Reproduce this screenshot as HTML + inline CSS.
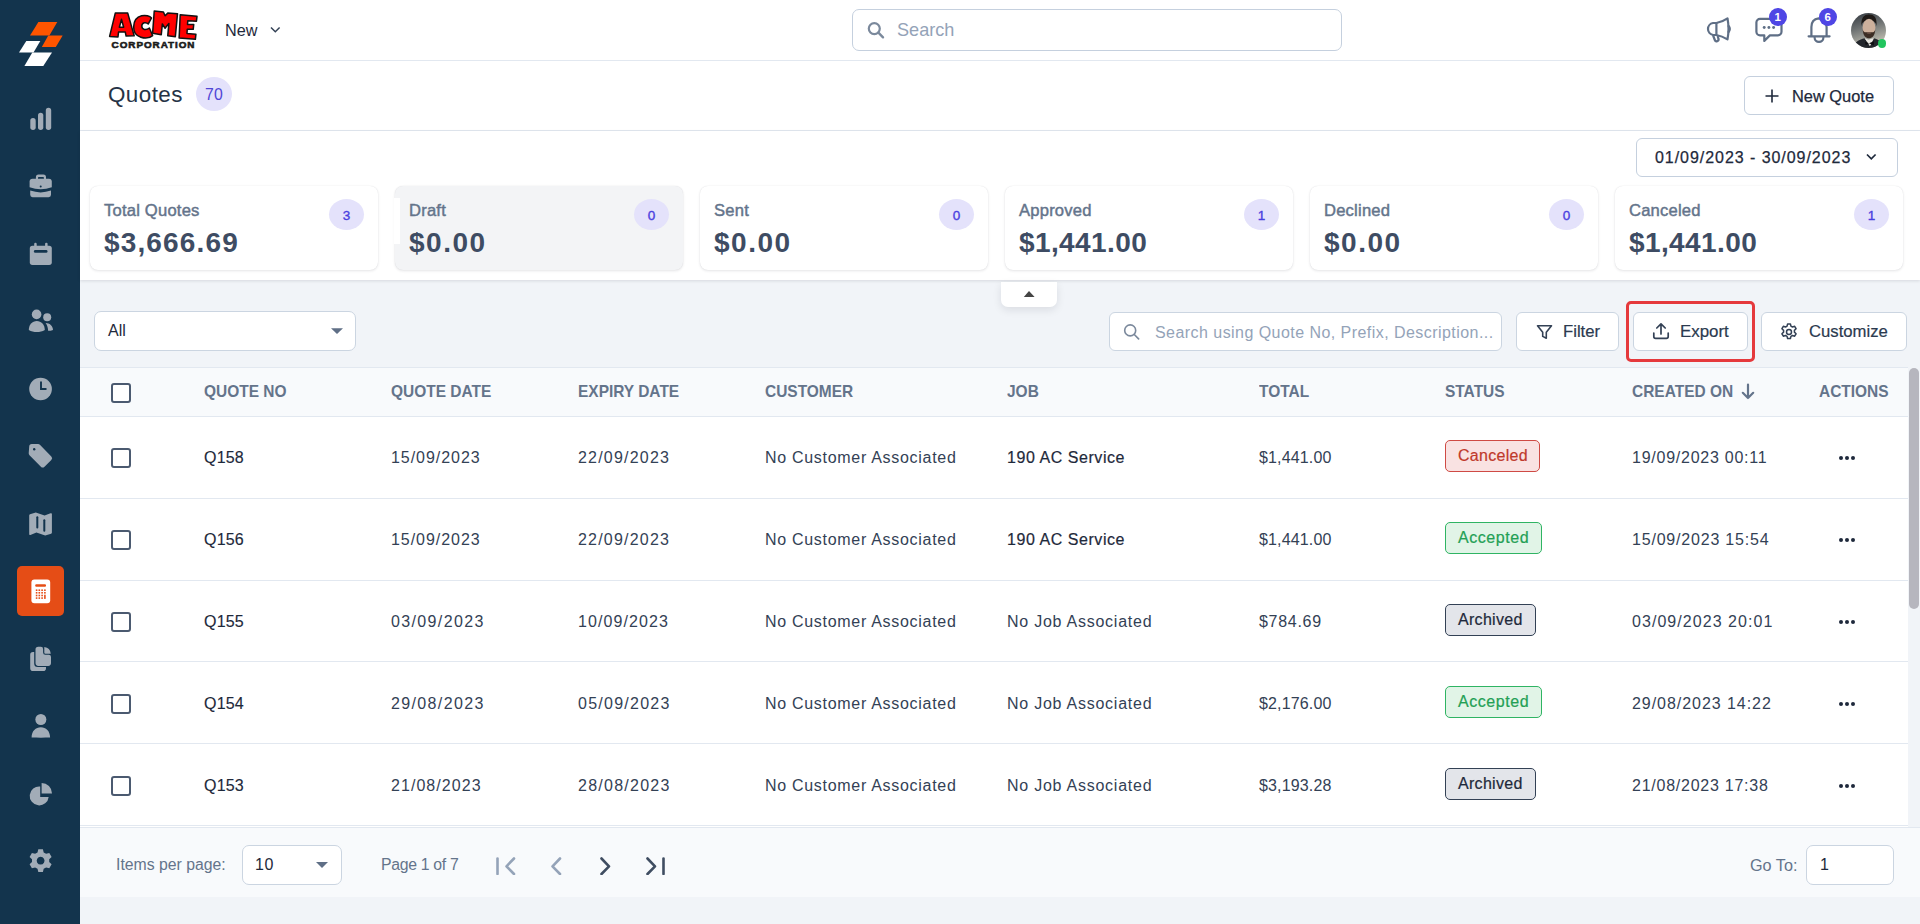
<!DOCTYPE html>
<html><head><meta charset="utf-8">
<style>
*{box-sizing:border-box;margin:0;padding:0}
html,body{width:1920px;height:924px;overflow:hidden;background:#f1f4f8;font-family:"Liberation Sans",sans-serif;color:#334155}
.abs{position:absolute}
#side{position:absolute;left:0;top:0;width:80px;height:924px;background:#13344d}
#side svg.ic{position:absolute;left:28px;width:25px;height:25px}
#hdr{position:absolute;left:80px;top:0;width:1840px;height:61px;background:#fff;border-bottom:1px solid #e2e8f0}
#title{position:absolute;left:80px;top:61px;width:1840px;height:70px;background:#fff;border-bottom:1px solid #e2e8f0}
#stats{position:absolute;left:80px;top:131px;width:1840px;height:149px;background:#fff;box-shadow:0 1px 3px rgba(15,23,42,.12)}
.card{position:absolute;top:55px;width:288px;height:84px;background:#fff;border-radius:8px;box-shadow:0 1px 3px rgba(15,23,42,.10),0 0 1px rgba(15,23,42,.12)}
.card .lbl{position:absolute;left:14px;top:15px;font-size:16.6px;color:#64748b;font-weight:400;-webkit-text-stroke:.45px #64748b;letter-spacing:.2px}
.card .val{position:absolute;left:14px;top:40.5px;font-size:28px;color:#3e4c63;font-weight:700;letter-spacing:1px}
.card .bdg{position:absolute;left:239px;top:13px;width:35px;height:31px;border-radius:50%;background:#e4e2fb;color:#4a3fe0;font-size:13.5px;text-align:center;line-height:33px;-webkit-text-stroke:.35px #4a3fe0}
.btn{position:absolute;background:#fff;border:1px solid #cbd5e1;border-radius:6px}
.txt{position:absolute;white-space:nowrap}
.th{position:absolute;top:381.5px;font-size:17px;font-weight:700;color:#64748b;white-space:nowrap;transform:scaleX(.91);transform-origin:left}
.row{position:absolute;left:80px;width:1828px;height:82px;background:#fff;border-bottom:1px solid #e2e8f0}
.cb{position:absolute;left:31px;width:20px;height:20px;border:2px solid #4b5a70;border-radius:3px;background:#fff}
.cell{position:absolute;top:32px;font-size:16px;color:#334155;white-space:nowrap;letter-spacing:.75px}
.st{position:absolute;left:1365px;top:23px;height:32px;border-radius:5px;border:1.5px solid;font-size:16px;line-height:29px;padding-left:12px;letter-spacing:.3px;-webkit-text-stroke:.2px currentColor}
.dots{position:absolute;left:1759px;top:39px}
.dots i{position:absolute;top:0;width:4px;height:4px;border-radius:50%;background:#1e293b}
</style></head><body>
<div id="side">
<svg class="abs" style="left:0;top:0" width="80" height="80" viewBox="0 0 80 80">
<polygon points="38.4,22 57.3,22 49.4,35.4 30,35.4" fill="#ff5500"/>
<polygon points="48.3,35.4 62.7,35.4 55.8,47 41.8,47" fill="#ff5500"/>
<polygon points="26.3,40.9 40.3,40.9 33.5,52.4 19,52.4" fill="#fff"/>
<polygon points="32.3,52.4 52,52.4 43.3,66 24.4,66" fill="#fff"/>
</svg>
<svg class="abs" style="left:0;top:0" width="80" height="924" viewBox="0 0 80 924" fill="#a2acb7">
<!-- bar chart -->
<rect x="30.3" y="118" width="5.4" height="12" rx="2.7"/>
<rect x="38" y="112.7" width="5.3" height="17.3" rx="2.65"/>
<rect x="45.8" y="107.7" width="5.4" height="22.3" rx="2.7"/>
<!-- briefcase -->
<path d="M35.9 178.9 v-1.7 a2.6 2.6 0 0 1 2.6-2.6 h4.9 a2.6 2.6 0 0 1 2.6 2.6 v1.7 h-2.1 v-1.1 a.7.7 0 0 0-.7-.7 h-4.5 a.7.7 0 0 0-.7.7 v1.1 z"/>
<path d="M29.6 181.6 a2.9 2.9 0 0 1 2.9-2.9 h16.4 a2.9 2.9 0 0 1 2.9 2.9 v5.6 Q40.7 191.4 29.6 187.2 z"/>
<path d="M30.2 190.6 Q40.7 194.2 51 190.6 v4.2 a2.4 2.4 0 0 1-2.4 2.4 h-16 a2.4 2.4 0 0 1-2.4-2.4 z"/>
<circle cx="40.7" cy="186.6" r="1" fill="#13344d"/>
<!-- calendar -->
<rect x="29.8" y="245.8" width="22" height="19.1" rx="2.6"/>
<rect x="34.2" y="242.8" width="2.5" height="4.5" rx="1.2"/>
<rect x="45.1" y="242.8" width="2.5" height="4.5" rx="1.2"/>
<rect x="33.9" y="250.1" width="13.6" height="2.6" rx="1.3" fill="#13344d"/>
<!-- users -->
<circle cx="36.6" cy="314.4" r="4.8"/>
<circle cx="47.2" cy="317.2" r="4"/>
<path d="M28.8 330 c0-5.5 3.5-9.1 8-9.1 s8 3.6 8 9.1 c-2.4 1.5-5 2-8 2 s-5.6-.5-8-2z"/>
<path d="M45.6 322.9 c4 0 7.4 2.8 7.4 7 c-1.5.6-3.2.8-4.9.8 c0-3-.8-5.5-2.5-7.8z"/>
<!-- clock -->
<circle cx="40.55" cy="389" r="11.35"/>
<path d="M41 381.5 V389 H46.5" stroke="#13344d" stroke-width="1.9" fill="none"/>
<!-- tag -->
<path d="M29.2 446.6 a2.6 2.6 0 0 1 2.6-2.6 h6.2 a2.6 2.6 0 0 1 1.9.8 l11.4 11.6 a2.6 2.6 0 0 1 0 3.6 l-6.8 6.7 a2.6 2.6 0 0 1-3.6 0 l-11.4-11.5 a2.6 2.6 0 0 1-.8-1.9z"/>
<circle cx="34.2" cy="449.3" r="1.2" fill="#13344d"/>
<!-- map -->
<path d="M29.2 515.5 Q29.2 514.6 30 514.3 L35.8 512.6 L44.6 515.6 L50.6 513.3 Q51.9 512.9 51.9 514 V532.6 Q51.9 533.4 51.1 533.7 L45.2 535.6 L36.4 532.6 L30.4 534.9 Q29.2 535.3 29.2 534.2 Z"/>
<rect x="36.3" y="516.2" width="2" height="12.2" rx="1" fill="#13344d"/>
<rect x="43.3" y="519.3" width="2" height="12.5" rx="1" fill="#13344d"/>
<!-- files -->
<path d="M38.3 646.8 h2.6 a2.2 2.2 0 0 1 2.2 2.2 v3.5 a2.2 2.2 0 0 0 2.2 2.2 h3.5 a2.2 2.2 0 0 1 2.2 2.2 v6.2 a2.8 2.8 0 0 1-2.8 2.8 h-9.9 a2.8 2.8 0 0 1-2.8-2.8 v-13.5 a2.8 2.8 0 0 1 2.8-2.8z"/>
<path d="M44.3 647 A7.6 7.6 0 0 1 50.8 653.8 L45.4 653.8 a1.1 1.1 0 0 1-1.1-1.1z"/>
<path d="M30.2 654.7 a2.8 2.8 0 0 1 2.8-2.8 h1.2 v11.6 a3.6 3.6 0 0 0 3.6 3.6 h8.2 v1.2 a2.8 2.8 0 0 1-2.8 2.8 h-10.2 a2.8 2.8 0 0 1-2.8-2.8z"/>
<!-- user -->
<circle cx="40.85" cy="719.5" r="5.5"/>
<path d="M31.6 737.6 c0-6.8 4.2-10.4 9.25-10.4 s9.25 3.6 9.25 10.4 c-2.8.1-6.1.1-9.25.1 s-6.4 0-9.25-.1z"/>
<!-- pie -->
<path d="M40.2 786.45 A9.5 9.5 0 1 0 48.65 796.9 H40.2 Z"/>
<path d="M41.6 783 A10.4 10.4 0 0 1 52 793.4 H41.6 Z"/>
<!-- gear -->
<path fill-rule="evenodd" d="M38.3 849.2 h4.6 l.8 3.2 l2.4 1.4 l3.2-.9 l2.3 4 l-2.4 2.3 v2.8 l2.4 2.3 l-2.3 4 l-3.2-.9 l-2.4 1.4 l-.8 3.2 h-4.6 l-.8-3.2 l-2.4-1.4 l-3.2.9 l-2.3-4 l2.4-2.3 v-2.8 l-2.4-2.3 l2.3-4 l3.2.9 l2.4-1.4z M40.6 856.8 a3.9 3.9 0 1 0 .01 0z"/>
</svg>
<div class="abs" style="left:17px;top:566px;width:47px;height:50px;border-radius:5px;background:#e54d16"></div>
<svg class="abs" style="left:0;top:.6px" width="80" height="924" viewBox="0 0 80 924">
<rect x="31.4" y="578.4" width="18.8" height="23.8" rx="3" fill="#fff"/>
<rect x="35.2" y="583.2" width="10.8" height="2.6" rx="1.1" fill="#e54d16"/>
<g fill="#e54d16"><rect x="35.8" y="588.4" width="1.6" height="1.6"/><rect x="38.5" y="588.4" width="1.6" height="1.6"/><rect x="41.3" y="588.4" width="1.6" height="1.6"/><rect x="44.1" y="588.4" width="1.6" height="1.6"/><rect x="35.8" y="591.0" width="1.6" height="1.6"/><rect x="38.5" y="591.0" width="1.6" height="1.6"/><rect x="41.3" y="591.0" width="1.6" height="1.6"/><rect x="44.1" y="591.0" width="1.6" height="1.6"/><rect x="35.8" y="593.7" width="1.6" height="1.6"/><rect x="38.5" y="593.7" width="1.6" height="1.6"/><rect x="41.3" y="593.7" width="1.6" height="1.6"/><rect x="44.1" y="593.7" width="1.6" height="4.2"/><rect x="35.8" y="596.3" width="1.6" height="1.6"/><rect x="38.5" y="596.3" width="1.6" height="1.6"/><rect x="41.3" y="596.3" width="1.6" height="1.6"/></g>
</svg>
</div>
<div id="hdr">
<svg class="abs" style="left:25px;top:5px" width="100" height="50" viewBox="0 0 1848 924">
<g fill="#f00" stroke="#111" stroke-width="28" stroke-linejoin="round">
<path d="M85 580 L190 150 L420 150 L540 570 L390 575 L375 500 L250 500 L240 590 Z M265 410 L305 265 L345 410 Z" fill-rule="evenodd"/>
<path d="M860 240 C800 170 540 150 530 400 C520 620 780 650 880 565 L820 425 C760 470 680 460 680 390 C680 320 760 310 800 350 Z"/>
<path d="M880 520 L910 110 L1080 130 L1110 200 L1160 150 L1340 160 L1300 585 L1160 570 L1180 340 L1110 430 L1060 350 L1040 550 Z"/>
<path d="M1370 610 L1390 180 L1700 210 L1690 300 L1530 290 L1525 360 L1640 360 L1630 450 L1520 450 L1515 525 L1680 540 L1670 635 Z"/>
</g>
</svg>
<div class="txt" style="left:31.6px;top:39.4px;font-size:9.9px;font-weight:700;color:#1a1a1a;letter-spacing:.95px;-webkit-text-stroke:.6px #1a1a1a;transform:scaleX(1.0);transform-origin:left">CORPORATION</div>
<div class="txt" style="left:145px;top:21px;font-size:16.2px;color:#1e293b">New</div>
<svg class="abs" style="left:190px;top:26px" width="11" height="8" viewBox="0 0 11 8"><path d="M1 1.5 L5.3 5.8 L9.6 1.5" stroke="#334155" stroke-width="1.5" fill="none"/></svg>
<div class="btn" style="left:772px;top:9px;width:490px;height:42px;border-color:#c5d0de;border-radius:7px"></div>
<svg class="abs" style="left:786px;top:20px" width="22" height="22" viewBox="0 0 22 22"><circle cx="8.3" cy="8.6" r="5.5" stroke="#7b899c" stroke-width="2.2" fill="none"/><path d="M12.4 12.7 L17 17.3" stroke="#7b899c" stroke-width="2.4" stroke-linecap="round"/></svg>
<div class="txt" style="left:817px;top:20px;font-size:18.1px;color:#94a3b8">Search</div>
<svg class="abs" style="left:1620px;top:10px" width="140" height="40" viewBox="1700 10 140 40" fill="none" stroke="#5f6f86" stroke-width="2.2" stroke-linecap="round" stroke-linejoin="round">
<path d="M1716.4 23 Q1722 22 1727.5 18.3 Q1729.5 29 1727.5 39.4 Q1722 36 1716.4 35 Z"/>
<path d="M1716.4 23 L1713 23 a6.1 6.1 0 0 0 0 12 L1716.4 35"/>
<path d="M1728.6 26 q2.4 3 0 6"/>
<path d="M1713.3 36 L1714.8 40 a1.9 1.9 0 0 0 3.6-1.3 L1717.8 36.5"/>
<path d="M1760 18.9 h17.9 a3.6 3.6 0 0 1 3.6 3.6 v9.3 a3.6 3.6 0 0 1-3.6 3.6 h-8 l-5.6 5.5 v-5.5 h-4.3 a3.6 3.6 0 0 1-3.6-3.6 v-9.3 a3.6 3.6 0 0 1 3.6-3.6z"/>
<path d="M1808.6 36.3 H1829.6 M1811.4 36.3 V27 Q1811.4 19.5 1818.6 18.4 Q1826.2 19.5 1826.6 27 V36.3"/>
<path d="M1814.6 37.5 a4.4 4.4 0 0 0 8.8 0"/>
</svg>
<svg class="abs" style="left:1620px;top:12px" width="220" height="40" viewBox="1700 12 220 40" fill="#5f6f86">
<circle cx="1764.2" cy="27.5" r="1.45"/><circle cx="1768.9" cy="27.5" r="1.45"/><circle cx="1773.6" cy="27.5" r="1.45"/>
</svg>
<div class="abs" style="left:1689px;top:8px;width:17.5px;height:18px;border-radius:50%;background:#4f46e5;color:#fff;font-size:11.5px;font-weight:700;text-align:center;line-height:18px">1</div>
<div class="abs" style="left:1739px;top:8px;width:17.5px;height:18px;border-radius:50%;background:#4f46e5;color:#fff;font-size:11.5px;font-weight:700;text-align:center;line-height:18px">6</div>
<svg class="abs" style="left:1771px;top:13px" width="35" height="35" viewBox="0 0 36 36">
<defs><linearGradient id="ag" x1="0" y1="0" x2="0.3" y2="1"><stop offset="0" stop-color="#30363d"/><stop offset=".45" stop-color="#6b6f70"/><stop offset="1" stop-color="#c2c0b3"/></linearGradient>
<clipPath id="ac"><circle cx="18" cy="18" r="18"/></clipPath></defs>
<g clip-path="url(#ac)">
<rect width="36" height="36" fill="url(#ag)"/>
<g transform="translate(0,-2.5)"><path d="M10.8 16 C10 7 13.5 4 18.5 4 C24 4 27 7 26.2 16 C25.5 12 24 10.5 18.5 10.5 C13 10.5 11.5 12 10.8 16Z" fill="#1f1a17"/>
<ellipse cx="18.5" cy="17.5" rx="6.6" ry="9" fill="#cdb09c"/>
<path d="M12 19.5 C12.5 26.5 15.5 28.5 18.5 28.5 C21.5 28.5 24.5 26.5 25 19.5 C24 23 22 22.5 18.5 22 C15 22.5 13 23 12 19.5Z" fill="#3b2c24"/>
<path d="M16 23 Q18.5 21.8 21 23 Q18.5 24.3 16 23Z" fill="#8a6a5c"/></g>
<path d="M1 38 C3 30 8 27.5 14 26 L19.5 34 L23.5 26 C29 27.5 33 30 36 38 Z" fill="#23262c"/>
<path d="M14 26 L18 27.5 L22 26.2 L23.5 26 L19.5 34 Z" fill="#e9e7e2"/>
<path d="M18.5 31 L23.5 29 L23.5 33.5 Z M18.5 31 L14.5 29.5 L15 33 Z" fill="#0d0d10"/>
</g>
</svg>
<div class="abs" style="left:1797.8px;top:38.9px;width:8.6px;height:9px;border-radius:50%;background:#22c55e"></div>
</div>
<div id="title">
<div class="txt" style="left:28px;top:20.8px;font-size:22.4px;color:#263346;letter-spacing:.45px">Quotes</div>
<div class="abs" style="left:116px;top:16px;width:36px;height:34px;border-radius:50%;background:#e4e2fb;color:#5046d6;font-size:15.8px;text-align:center;line-height:35px;letter-spacing:.3px">70</div>
<div class="btn" style="left:1664px;top:15px;width:150px;height:39px;border-color:#c5d0de"></div>
<svg class="abs" style="left:1685px;top:28px" width="14" height="14" viewBox="0 0 14 14"><path d="M7 .5 V13.5 M.5 7 H13.5" stroke="#1e293b" stroke-width="1.6"/></svg>
<div class="txt" style="left:1712px;top:25.5px;font-size:16.4px;color:#1e293b;-webkit-text-stroke:.25px #1e293b">New Quote</div>
</div>
<div id="stats">
<div class="btn" style="left:1556px;top:7px;width:262px;height:39px;border-color:#c5d0de"></div>
<div class="txt" style="left:1575px;top:17.5px;font-size:16px;color:#1e293b;letter-spacing:.95px;-webkit-text-stroke:.25px #1e293b">01/09/2023 - 30/09/2023</div>
<svg class="abs" style="left:1786px;top:22px" width="11" height="8" viewBox="0 0 11 8"><path d="M1 1.5 L5.3 5.8 L9.6 1.5" stroke="#1e293b" stroke-width="1.7" fill="none"/></svg>
<div class="card" style="left:10px;"><div class="lbl">Total Quotes</div><div class="val" style="letter-spacing:1.15px">$3,666.69</div><div class="bdg">3</div></div>
<div class="card" style="left:315px;background:#f3f4f6"><div class="lbl">Draft</div><div class="val" style="letter-spacing:1.5px">$0.00</div><div class="bdg">0</div></div>
<div class="card" style="left:620px;"><div class="lbl">Sent</div><div class="val" style="letter-spacing:1.5px">$0.00</div><div class="bdg">0</div></div>
<div class="card" style="left:925px;"><div class="lbl">Approved</div><div class="val" style="letter-spacing:.4px">$1,441.00</div><div class="bdg">1</div></div>
<div class="card" style="left:1230px;"><div class="lbl">Declined</div><div class="val" style="letter-spacing:1.5px">$0.00</div><div class="bdg">0</div></div>
<div class="card" style="left:1535px;"><div class="lbl">Canceled</div><div class="val" style="letter-spacing:.4px">$1,441.00</div><div class="bdg">1</div></div>
<div class="abs" style="left:314px;top:67px;width:6px;height:46px;background:#fff"></div>
</div>
<div class="abs" style="left:1001px;top:282px;width:56px;height:25px;background:#fff;border-radius:0 0 7px 7px;box-shadow:0 3px 8px rgba(15,23,42,.10)"></div>
<svg class="abs" style="left:1023px;top:290px" width="12" height="8" viewBox="0 0 12 8"><path d="M.8 7 L6 .9 L11.6 7Z" fill="#454545"/></svg>
<div id="filters">
<div class="btn" style="left:94px;top:311px;width:262px;height:40px;border-color:#cbd5e1;border-radius:7px"></div>
<div class="txt" style="left:108px;top:322px;font-size:16px;color:#1e293b">All</div>
<svg class="abs" style="left:330px;top:327px" width="14" height="8" viewBox="0 0 14 8"><path d="M1 1.2 H13 L7 7Z" fill="#5f6f86"/></svg>
<div class="btn" style="left:1109px;top:312px;width:393px;height:39px;border-color:#cbd5e1"></div>
<svg class="abs" style="left:1122px;top:322px" width="20" height="20" viewBox="0 0 20 20"><circle cx="8.2" cy="8.4" r="5.5" stroke="#7b899c" stroke-width="1.6" fill="none"/><path d="M12.3 12.5 L16.6 16.8" stroke="#7b899c" stroke-width="1.7" stroke-linecap="round"/></svg>
<div class="txt" style="left:1155px;top:323.5px;font-size:16px;color:#94a3b8;letter-spacing:.45px">Search using Quote No, Prefix, Description...</div>
<div class="btn" style="left:1516px;top:312px;width:103px;height:39px;border-color:#cbd5e1"></div>
<svg class="abs" style="left:1536px;top:324px" width="17" height="16" viewBox="0 0 17 16"><path d="M1.5 1.8 H15.5 L10.3 8.2 V14.2 L6.7 12.4 V8.2 Z" stroke="#334155" stroke-width="1.6" fill="none" stroke-linejoin="round"/></svg>
<div class="txt" style="left:1563px;top:321.5px;font-size:16.7px;color:#2b3a4f;-webkit-text-stroke:.2px #2b3a4f">Filter</div>
<div class="abs" style="left:1626px;top:301px;width:129px;height:61px;border:3.5px solid #e5393c;border-radius:5px"></div>
<div class="btn" style="left:1633px;top:312px;width:115px;height:39px;border-color:#cbd5e1"></div>
<svg class="abs" style="left:1651px;top:321px" width="20" height="20" viewBox="0 0 20 20"><path d="M10 13 V3 M5.8 7 L10 2.8 L14.2 7 M2.8 12 V15.5 a1.8 1.8 0 0 0 1.8 1.8 h10.8 a1.8 1.8 0 0 0 1.8-1.8 V12" stroke="#334155" stroke-width="1.7" fill="none" stroke-linecap="round" stroke-linejoin="round"/></svg>
<div class="txt" style="left:1680px;top:321.5px;font-size:16.9px;color:#2b3a4f;-webkit-text-stroke:.2px #2b3a4f">Export</div>
<div class="btn" style="left:1761px;top:312px;width:146px;height:39px;border-color:#cbd5e1"></div>
<svg class="abs" style="left:1779px;top:322px" width="20" height="20" viewBox="0 0 24 24"><path d="M10.3 2.3 h3.4 l.6 2.6 1.9 1.1 2.6-.8 1.7 2.9-2 1.9 v2.2 l2 1.9-1.7 2.9-2.6-.8-1.9 1.1-.6 2.6 h-3.4 l-.6-2.6-1.9-1.1-2.6.8-1.7-2.9 2-1.9 v-2.2 l-2-1.9 1.7-2.9 2.6.8 1.9-1.1z" stroke="#334155" stroke-width="1.8" fill="none" stroke-linejoin="round"/><circle cx="12" cy="12" r="3" stroke="#334155" stroke-width="1.8" fill="none"/></svg>
<div class="txt" style="left:1809px;top:321.5px;font-size:16.7px;color:#2b3a4f;-webkit-text-stroke:.2px #2b3a4f">Customize</div>
</div>
<div class="abs" style="left:80px;top:367px;width:1828px;height:50px;background:#f8fafc;border-top:1px solid #e2e8f0;border-bottom:1px solid #e2e8f0"></div>
<div class="abs" style="left:111px;top:383px;width:20px;height:20px;border:2px solid #4b5a70;border-radius:3px;background:#fff"></div>
<div class="th" style="left:204px">QUOTE NO</div>
<div class="th" style="left:391px">QUOTE DATE</div>
<div class="th" style="left:578px">EXPIRY DATE</div>
<div class="th" style="left:765px">CUSTOMER</div>
<div class="th" style="left:1007px">JOB</div>
<div class="th" style="left:1259px">TOTAL</div>
<div class="th" style="left:1445px">STATUS</div>
<div class="th" style="left:1632px">CREATED ON</div>
<svg class="abs" style="left:1741px;top:383px" width="14" height="17" viewBox="0 0 14 17"><path d="M7 1.5 V15 M1.8 9.8 L7 15 L12.2 9.8" stroke="#64748b" stroke-width="2.2" fill="none" stroke-linecap="round" stroke-linejoin="round"/></svg>
<div class="th" style="left:1819px">ACTIONS</div>
<div class="row" style="top:417px;height:82px">
<div class="cb" style="top:31px"></div>
<div class="cell" style="left:124px;color:#1e293b;-webkit-text-stroke:.15px #1e293b;letter-spacing:.2px">Q158</div>
<div class="cell" style="left:311px;letter-spacing:0.95px">15/09/2023</div>
<div class="cell" style="left:498px;letter-spacing:1.2px">22/09/2023</div>
<div class="cell" style="left:685px;letter-spacing:.7px">No Customer Associated</div>
<div class="cell" style="left:927px;letter-spacing:.55px;color:#1e293b;-webkit-text-stroke:.2px #1e293b">190 AC Service</div>
<div class="cell" style="left:1179px;letter-spacing:.15px">$1,441.00</div>
<div class="st" style="width:95px;background:#f9e2e2;border-color:#cf4a44;color:#c0392b">Canceled</div>
<div class="cell" style="left:1552px;letter-spacing:0.75px">19/09/2023 00:11</div>
<div class="dots"><i style="left:0"></i><i style="left:6px"></i><i style="left:12px"></i></div>
</div>
<div class="row" style="top:499px;height:82px">
<div class="cb" style="top:31px"></div>
<div class="cell" style="left:124px;color:#1e293b;-webkit-text-stroke:.15px #1e293b;letter-spacing:.2px">Q156</div>
<div class="cell" style="left:311px;letter-spacing:0.95px">15/09/2023</div>
<div class="cell" style="left:498px;letter-spacing:1.2px">22/09/2023</div>
<div class="cell" style="left:685px;letter-spacing:.7px">No Customer Associated</div>
<div class="cell" style="left:927px;letter-spacing:.55px;color:#1e293b;-webkit-text-stroke:.2px #1e293b">190 AC Service</div>
<div class="cell" style="left:1179px;letter-spacing:.15px">$1,441.00</div>
<div class="st" style="width:97px;background:#e1f4e7;border-color:#2fb463;color:#23a055;letter-spacing:.55px">Accepted</div>
<div class="cell" style="left:1552px;letter-spacing:0.8px">15/09/2023 15:54</div>
<div class="dots"><i style="left:0"></i><i style="left:6px"></i><i style="left:12px"></i></div>
</div>
<div class="row" style="top:581px;height:81px">
<div class="cb" style="top:31px"></div>
<div class="cell" style="left:124px;color:#1e293b;-webkit-text-stroke:.15px #1e293b;letter-spacing:.2px">Q155</div>
<div class="cell" style="left:311px;letter-spacing:1.36px">03/09/2023</div>
<div class="cell" style="left:498px;letter-spacing:1.1px">10/09/2023</div>
<div class="cell" style="left:685px;letter-spacing:.7px">No Customer Associated</div>
<div class="cell" style="left:927px;letter-spacing:.75px;">No Job Associated</div>
<div class="cell" style="left:1179px;letter-spacing:.7px">$784.69</div>
<div class="st" style="width:91px;background:#e3e5ea;border-color:#334155;color:#1e293b">Archived</div>
<div class="cell" style="left:1552px;letter-spacing:1.05px">03/09/2023 20:01</div>
<div class="dots"><i style="left:0"></i><i style="left:6px"></i><i style="left:12px"></i></div>
</div>
<div class="row" style="top:662px;height:82px">
<div class="cb" style="top:32px"></div>
<div class="cell" style="top:33px;left:124px;color:#1e293b;-webkit-text-stroke:.15px #1e293b;letter-spacing:.2px">Q154</div>
<div class="cell" style="top:33px;left:311px;letter-spacing:1.36px">29/08/2023</div>
<div class="cell" style="top:33px;left:498px;letter-spacing:1.25px">05/09/2023</div>
<div class="cell" style="top:33px;left:685px;letter-spacing:.7px">No Customer Associated</div>
<div class="cell" style="top:33px;left:927px;letter-spacing:.75px;">No Job Associated</div>
<div class="cell" style="top:33px;left:1179px;letter-spacing:.15px">$2,176.00</div>
<div class="st" style="top:24px;width:97px;background:#e1f4e7;border-color:#2fb463;color:#23a055;letter-spacing:.55px">Accepted</div>
<div class="cell" style="top:33px;left:1552px;letter-spacing:0.95px">29/08/2023 14:22</div>
<div class="dots" style="top:40px"><i style="left:0"></i><i style="left:6px"></i><i style="left:12px"></i></div>
</div>
<div class="row" style="top:744px;height:82px">
<div class="cb" style="top:32px"></div>
<div class="cell" style="top:33px;left:124px;color:#1e293b;-webkit-text-stroke:.15px #1e293b;letter-spacing:.2px">Q153</div>
<div class="cell" style="top:33px;left:311px;letter-spacing:1.05px">21/08/2023</div>
<div class="cell" style="top:33px;left:498px;letter-spacing:1.25px">28/08/2023</div>
<div class="cell" style="top:33px;left:685px;letter-spacing:.7px">No Customer Associated</div>
<div class="cell" style="top:33px;left:927px;letter-spacing:.75px;">No Job Associated</div>
<div class="cell" style="top:33px;left:1179px;letter-spacing:.15px">$3,193.28</div>
<div class="st" style="top:24px;width:91px;background:#e3e5ea;border-color:#334155;color:#1e293b">Archived</div>
<div class="cell" style="top:33px;left:1552px;letter-spacing:0.75px">21/08/2023 17:38</div>
<div class="dots" style="top:40px"><i style="left:0"></i><i style="left:6px"></i><i style="left:12px"></i></div>
</div>
<div class="abs" style="left:1908px;top:367px;width:12px;height:460px;background:#f1f4f8"></div>
<div class="abs" style="left:1909px;top:368px;width:10px;height:241px;border-radius:5px;background:#b6b6be"></div>
<div class="abs" style="left:80px;top:826px;width:1828px;height:1px;background:#fff"></div>
<div id="foot" class="abs" style="left:80px;top:827px;width:1840px;height:70px;background:#f8fafc;border-top:1px solid #e2e8f0">
<div class="txt" style="left:36px;top:28px;font-size:15.8px;color:#64748b">Items per page:</div>
<div class="btn" style="left:162px;top:17px;width:100px;height:40px;border-color:#cbd5e1;border-radius:7px"></div>
<div class="txt" style="left:175px;top:27.5px;font-size:16px;color:#1e293b;letter-spacing:.5px">10</div>
<svg class="abs" style="left:235px;top:33px" width="14" height="8" viewBox="0 0 14 8"><path d="M1 1 H13 L7 7Z" fill="#5f6f86"/></svg>
<div class="txt" style="left:301px;top:28px;font-size:15.8px;color:#64748b;letter-spacing:-.3px">Page 1 of 7</div>
<svg class="abs" style="left:410px;top:23px" width="180" height="24" viewBox="490 850 180 24" fill="none" stroke-linecap="round" stroke-linejoin="round">
<path d="M497.5 857.5 V873" stroke="#94a3b8" stroke-width="2.6"/>
<path d="M514 857.5 L506.5 865.3 L514 873" stroke="#94a3b8" stroke-width="2.6"/>
<path d="M560 857.5 L552.5 865.3 L560 873" stroke="#94a3b8" stroke-width="2.6"/>
<path d="M601.5 857.5 L609 865.3 L601.5 873" stroke="#3f4d61" stroke-width="2.6"/>
<path d="M647.5 857.5 L655 865.3 L647.5 873" stroke="#3f4d61" stroke-width="2.6"/>
<path d="M663.5 857.5 V873" stroke="#3f4d61" stroke-width="2.6"/>
</svg>
<div class="txt" style="left:1670px;top:28px;font-size:16.2px;color:#64748b">Go To:</div>
<div class="btn" style="left:1726px;top:17px;width:88px;height:40px;border-color:#cbd5e1;border-radius:7px"></div>
<div class="txt" style="left:1740px;top:28px;font-size:16px;color:#1e293b">1</div>
</div>
</body></html>
